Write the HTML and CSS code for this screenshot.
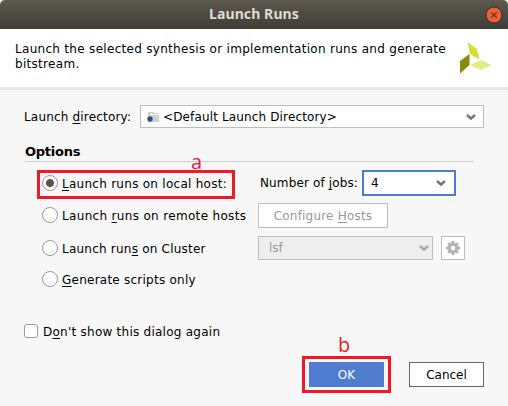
FILE: index.html
```
<!DOCTYPE html>
<html lang="en">
<head>
<meta charset="utf-8">
<title>Launch Runs</title>
<link rel="stylesheet" href="styles.css">
</head>
<body>
<main class="dialog">
  <header class="titlebar">
    <h1 class="title">Launch Runs</h1>
    <button class="close" aria-label="Close"><svg width="18" height="18" viewBox="0 0 18 18"><circle cx="9" cy="9" r="8" fill="#ed6035" stroke="#33312d"/><path d="M6.300 6.300l5.400 5.400M11.700 6.300l-5.400 5.400" stroke="#55301f" stroke-width="1.200"/></svg></button>
  </header>
  <section class="intro">
    <p class="description">Launch the selected synthesis or implementation runs and generate<br>bitstream.</p>
    <svg class="logo" width="34" height="34" viewBox="0 0 34 34"><path d="M9.500 1L19 8 21.500 19 12 13z" fill="#d5df38"/><path d="M2 20L11.500 13V24L2 32.500z" fill="#858b0a"/><path d="M12 24L23 19 33.500 24 23 29z" fill="#e4eb83"/></svg>
  </section>
  <section class="directory">
    <label class="directory-label">Launch <u>d</u>irectory:</label>
    <div class="combo combo-directory">
      <svg class="folder" width="13" height="12" viewBox="0 0 13 12"><path d="M1 1h5l1 1h4v2h1v7H1z" fill="#d0d0d0"/><path d="M3 3.500h8" stroke="#fff"/><circle cx="3" cy="8" r="2.700" fill="#30508c"/></svg>
      <span class="directory-value">&lt;Default Launch Directory&gt;</span>
      <svg class="chevron" width="12" height="8" viewBox="0 0 12 8"><path d="M2 2L6 5.500 10 2"/></svg>
    </div>
  </section>
  <h2 class="heading"><span>Options</span></h2>
  <section class="options">
    <div class="option local">
      <span class="choice"><i class="radio checked"></i><span class="choice-text local-text"><u>L</u>aunch runs on local host:</span></span>
      <label class="jobs-label">Number of <u>j</u>obs:</label>
      <div class="combo combo-jobs"><span>4</span><svg class="chevron" width="12" height="8" viewBox="0 0 12 8"><path d="M2 2L6 5.500 10 2"/></svg></div>
      <span class="mark mark-local"></span><span class="note note-a">a</span>
    </div>
    <div class="option remote">
      <span class="choice"><i class="radio"></i><span class="choice-text remote-text">Launch <u>r</u>uns on remote hosts</span></span>
      <button class="button configure"><span>Configure <u>H</u>osts</span></button>
    </div>
    <div class="option cluster">
      <span class="choice"><i class="radio"></i><span class="choice-text cluster-text">Launch run<u>s</u> on Cluster</span></span>
      <div class="combo combo-cluster"><span>lsf</span><svg class="chevron" width="12" height="8" viewBox="0 0 12 8"><path d="M2 2L6 5.500 10 2"/></svg></div>
      <button class="button settings" aria-label="Cluster settings"><svg width="14" height="14" viewBox="-7 -7 14 14"><g fill="#b3b3b3"><circle r="5.300"/><path d="M-1.500-7h3v14h-3zM-7-1.500h14v3h-14z"/><path d="M-1.500-6.700h3v13.400h-3zM-6.700-1.500h13.400v3h-13.400z" transform="rotate(45)"/></g><circle r="2.200" fill="#fff"/></svg></button>
    </div>
    <div class="option scripts"><span class="choice"><i class="radio"></i><span class="choice-text scripts-text"><u>G</u>enerate scripts only</span></span></div>
  </section>
  <label class="remember"><i class="checkbox"></i><span class="remember-text">D<u>o</u>n't show this dialog again</span></label>
  <footer class="actions">
    <button class="button ok">OK</button>
    <button class="button cancel"><span>Cancel</span></button>
    <span class="mark mark-ok"></span><span class="note note-b">b</span>
  </footer>
</main>
</body>
</html>
```
FILE: styles.css
```
* { box-sizing: border-box; }
body { margin: 0; background: #f7f7f7; color: #000; font: 12px/15px "DejaVu Sans", sans-serif; overflow: hidden; }
button { margin: 0; padding: 0; font: inherit; }
h1, h2, p { margin: 0; }
u { text-decoration: underline; text-decoration-thickness: 1px; text-underline-offset: 2px; text-decoration-skip-ink: none; }
.dialog { width: 508px; height: 406px; white-space: nowrap; }
.titlebar { display: grid; grid-template-columns: 30px 1fr 30px; align-items: center; height: 29px; border-radius: 5px 5px 0 0; background: linear-gradient(#5d594f, #3d3c37); }
.title { grid-column: 2; padding-bottom: 2px; text-align: center; color: #dfdbd2; font: bold 14px/20px "Noto Sans", sans-serif; letter-spacing: .1px; }
.close { display: flex; width: 18px; height: 18px; margin-left: 7px; border: 0; background: none; }
.intro { display: flex; justify-content: space-between; height: 61px; padding: 12px 16px 0 15px; border-bottom: 3px solid #e6e6e6; background: #fff; }
.description { padding-top: 1px; letter-spacing: .3px; }
.directory { display: flex; align-items: center; height: 23px; margin: 15px 24px 0; }
.directory-label { width: 116px; padding-top: 1px; letter-spacing: .18px; }
.combo { display: flex; align-items: center; justify-content: space-between; border: 1px solid #bebebe; background: #fff; }
.combo-directory { flex: 1; height: 23px; padding: 0 6px 0 6px; }
.directory-value { flex: 1; margin-left: 3px; padding-top: 1px; letter-spacing: .14px; }
.chevron { fill: none; stroke: #777; stroke-width: 2.5; }
.heading { width: 449px; height: 18px; margin: 16px 0 0 25px; border-bottom: 1px solid #ccc; font: bold 13px/15px "DejaVu Sans", sans-serif; letter-spacing: -.25px; }
.options { padding: 8px 0 0 42px; }
.option { position: relative; display: flex; height: 33px; }
.choice { display: flex; align-items: center; width: 216px; height: 26px; }
.choice-text { padding-top: 2px; }
.radio { width: 16px; height: 16px; margin-right: 4px; border: 1px solid #999; border-radius: 50%; background: #fff; }
.checked { background: radial-gradient(circle, #555 0 3.5px, #fff 4.5px); }
.remote .choice, .cluster .choice, .scripts .choice { height: 24px; }
.remote .choice-text, .cluster .choice-text, .scripts .choice-text { padding-top: 3px; }
.local-text { letter-spacing: .27px; }
.remote-text { letter-spacing: .33px; }
.cluster-text { letter-spacing: .22px; }
.scripts-text { letter-spacing: .24px; }
.jobs-label { width: 104px; padding: 6px 0 0 2px; letter-spacing: .13px; }
.combo-jobs { width: 94px; height: 26px; padding: 0 7px; border: 2px solid #4d7bcf; }
.button { display: flex; align-items: center; justify-content: center; border: 1px solid #bebebe; background: #fff; color: #000; }
.configure { width: 130px; height: 25px; color: #999; letter-spacing: .2px; }
.configure span { padding-top: 1px; }
.combo-cluster { width: 175px; height: 24px; padding: 0 2px 0 10px; background: #eee; color: #999; }
.combo-cluster .chevron { stroke: #aaa; }
.settings { width: 24px; height: 24px; margin-left: 8px; }
.scripts { height: 26px; margin-top: -2px; }
.remember { display: flex; align-items: center; height: 16px; margin: 30px 0 0 24px; }
.remember-text { padding-top: 2px; letter-spacing: .25px; }
.checkbox { width: 14px; height: 14px; margin-right: 5px; border: 1px solid #999; border-radius: 3px; background: #fff; }
.actions { position: relative; display: flex; gap: 25px; padding: 23px 0 0 309px; }
.actions .button { width: 75px; height: 25px; padding-top: 1px; }
.actions .ok { border: 0; background: #4f7ccf; color: #fff; }
.actions .cancel { border-color: #666; }
.mark { position: absolute; border: 3px solid #ed1c24; pointer-events: none; }
.mark-local { left: -5px; top: 0; width: 198px; height: 29px; }
.mark-ok { left: 302px; top: 17px; width: 89px; height: 37px; }
.note { position: absolute; color: #ed1c24; font: 20px/24px "Open Sans", sans-serif; }
.note-a { left: 149px; top: -20px; }
.note-b { left: 338px; top: -6px; }
```
